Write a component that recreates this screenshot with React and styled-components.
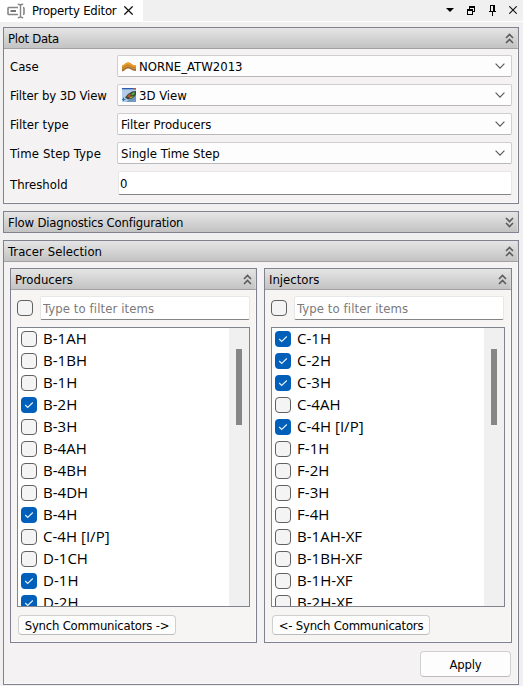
import React from "react";
import styled, { createGlobalStyle, css } from "styled-components";

const GlobalStyle = createGlobalStyle`
  *, *::before, *::after { box-sizing: border-box; }
  body {
    margin: 0;
    background: #f0f0f0;
    color: #000;
    font: 13px/16px "DejaVu Sans Condensed", "DejaVu Sans", sans-serif;
    font-stretch: condensed;
    overflow: hidden;
  }
  button, input { font: inherit; color: inherit; letter-spacing: inherit; }
  svg { display: block; flex: none; }
`;

const Window = styled.main`
  width: 523px;
  height: 686px;
  display: flex;
  flex-direction: column;
  background: #f0f0f0;
`;

const TitleBar = styled.header`
  height: 22px;
  display: flex;
  justify-content: space-between;
  border-bottom: 1px solid #fff;
`;

const Tab = styled.div`
  width: 143px;
  height: 22px;
  padding: 0 0 1px 7px;
  display: flex;
  align-items: center;
  background: #fff;
`;

const TabTitle = styled.span`
  width: 85px;
  margin: 0 7px 0 7px;
  white-space: nowrap;
  letter-spacing: -0.22px;
`;

const WindowTools = styled.div`
  display: flex;
  align-items: center;
  gap: 13px;
  padding-right: 6px;
  height: 20px;
`;

const Body = styled.div`
  flex: 1;
  display: flex;
  flex-direction: column;
  gap: 7px;
  padding: 5px 4px 1px 3px;
`;

const Group = styled.section`
  flex: ${(p) => (p.$fill ? "1" : "none")};
  height: ${(p) => (p.$height ? `${p.$height}px` : "auto")};
  width: ${(p) => (p.$width ? `${p.$width}px` : "auto")};
  display: flex;
  flex-direction: column;
  border: 1px solid #80838f;
  background: ${(p) => (p.$nested ? "#f7f5f4" : "#f4f2f3")};
  box-shadow: inset -1px -1px #fbfafb;
`;

const GroupHeader = styled.div`
  height: ${(p) => (p.$closed ? 20 : 21)}px;
  flex: none;
  display: flex;
  align-items: center;
  justify-content: space-between;
  padding: 1px 4px 0 4px;
  background: linear-gradient(#e6e5e6, #c3c3c3);
  border-bottom: ${(p) => (p.$closed ? "none" : "1px solid #a4a1a4")};
  box-shadow: inset -1px 0 #d8d8d8;
`;

const Form = styled.div`
  display: flex;
  flex-direction: column;
  gap: 7px;
  padding: 6px 7px 0 6px;
`;

const FormRow = styled.label`
  height: ${(p) => (p.$height || 22)}px;
  display: grid;
  grid-template-columns: 107px 395px;
  align-items: center;
`;

const Label = styled.span`
  white-space: nowrap;
  letter-spacing: ${(p) => p.$spacing || 0}px;
  padding-top: ${(p) => p.$drop || 0}px;
`;

const Combo = styled.div`
  height: 22px;
  display: flex;
  align-items: center;
  padding: 0 6px 0 3px;
  border: 1px solid #cfcfd0;
  border-bottom-color: #b9b9ba;
  border-radius: 2px;
  background: #fdfdfd;
`;

const ComboIcon = styled.span`
  width: 14px;
  margin: 0 3px 0 1px;
`;

const ComboValue = styled.span`
  flex: 1;
  padding-top: 1px;
  white-space: nowrap;
`;

const Field = styled.input`
  display: block;
  width: ${(p) => p.$width}px;
  height: 24px;
  margin: 0 0 0 ${(p) => p.$indent || 0}px;
  padding: 1px 2px 0 ${(p) => (p.$indent ? 1 : 2)}px;
  border: 1px solid #e8e7e7;
  border-bottom-color: #858585;
  border-radius: 2px;
  background: #fff;
  outline: none;
  &::placeholder { color: #7a7a7a; opacity: 1; }
`;

const Columns = styled.div`
  display: flex;
  justify-content: space-between;
  padding: 6px 6px 0;
`;

const FilterRow = styled.div`
  display: flex;
  align-items: center;
  gap: 7px;
  padding: 6px 0 7px 6px;
  letter-spacing: 0.1px;
`;

const Box = styled.span`
  width: 16px;
  height: 16px;
  flex: none;
  display: grid;
  place-items: center;
  border-radius: 4px;
  ${(p) =>
    p.$checked
      ? css`background: #005fb8;`
      : css`border: 1px solid #616161; background: #f4f4f4;`}
`;

const ListFrame = styled.div`
  width: ${(p) => p.$width}px;
  height: 280px;
  margin-left: 6px;
  display: flex;
  border: 1px solid #80858d;
  background: #fff;
`;

const Items = styled.ul`
  flex: 1;
  margin: 0;
  padding: 0 0 0 3px;
  list-style: none;
  overflow: hidden;
`;

const Item = styled.li`
  height: 22px;
  display: flex;
  align-items: center;
  gap: 6px;
  font: 15px/20px "Open Sans", "Noto Sans", sans-serif;
  letter-spacing: 0.03px;
  white-space: nowrap;
`;

const ItemName = styled.span`
  padding-bottom: 2px;
`;

const Track = styled.div`
  width: 20px;
  flex: none;
  padding: 21px 0 0 7px;
  background: #f0f0f0;
`;

const Thumb = styled.div`
  width: 6px;
  height: 76px;
  background: #868686;
`;

const Button = styled.button`
  flex: none;
  width: ${(p) => p.$width}px;
  height: ${(p) => p.$height}px;
  padding: 1px 0 0;
  border: 1px solid #d0d0d0;
  border-bottom-color: #bcbcbc;
  border-radius: 4px;
  background: #fdfdfd;
  white-space: nowrap;
  letter-spacing: ${(p) => p.$spacing || 0}px;
`;

const SyncArea = styled.div`
  padding: 8px 0 0 7px;
`;

const Actions = styled.footer`
  display: flex;
  justify-content: flex-end;
  padding: 8px 7px 0;
`;

const EditorIcon = () => (
  <svg width="18" height="18" viewBox="0 0 18 18" fill="none" stroke="#858585" strokeWidth="1.6">
    <path d="M11 5.500H1.800Q1 5.500 1 6.300v5.400q0 .8.800.8H11M16 5.500q1 0 1 1v5q0 1-1 1" />
    <path d="M3.500 9H9" strokeWidth="2" stroke="#747474" />
    <path d="M13.500 3.500v11M10.800 2.300c1.700 0 2.700.4 2.700 1.400 0-1 1-1.400 2.700-1.400M10.800 15.700c1.700 0 2.700-.4 2.700-1.400 0 1 1 1.400 2.700 1.400" strokeWidth="1.400" />
  </svg>
);

const CloseIcon = ({ size = 8 }) => (
  <svg width={size} height={size} viewBox="0 0 8 8" stroke="#111" strokeWidth="1.1">
    <path d="M.3.3l7.4 7.4M7.700.3L.3 7.700" />
  </svg>
);

const MenuIcon = () => (
  <svg width="8" height="4" viewBox="0 0 8 4"><path d="M0 0h8L4 4z" /></svg>
);

const RestoreIcon = () => (
  <svg width="9" height="9" viewBox="0 0 9 9" fill="none" stroke="#000" shapeRendering="crispEdges">
    <path d="M2.500 3V.5h5v5H6" /><path d="M2 1h6M0 4h6" strokeWidth="2" /><path d="M.5 3.500h5v5h-5z" />
  </svg>
);

const PinIcon = () => (
  <svg width="7" height="11" viewBox="0 0 7 11" fill="none" stroke="#000" shapeRendering="crispEdges">
    <path d="M1.500 6V.5h4V6M0 6.500h7M3.500 7v4" /><path d="M5 0v6" strokeWidth="2" />
  </svg>
);

const Chevrons = ({ down }) => (
  <svg width="9" height="12" viewBox="0 0 9 12" fill="none" stroke="#5c5c5c" strokeWidth="1.6">
    {down ? <path d="M1 1l3.500 3.500L8 1M1 6l3.500 3.500L8 6" /> : <path d="M1 5l3.500-3.500L8 5M1 10l3.500-3.500L8 10" />}
  </svg>
);

const ComboArrow = () => (
  <svg width="10" height="6" viewBox="0 0 10 6" fill="none" stroke="#555" strokeWidth="1.1">
    <path d="M.6.7L5 5.100 9.400.7" />
  </svg>
);

const CheckIcon = () => (
  <svg width="10" height="8" viewBox="0 0 10 8" fill="none" stroke="#e8f4ff" strokeWidth="1.1">
    <path d="M1.200 4l2.500 2.500L8.800 1.500" />
  </svg>
);

const CaseIcon = () => (
  <svg width="14" height="14" viewBox="0 0 14 14">
    <path d="M0 6.500C2.500 6.500 3 3.500 6 3.500S9.500 6.200 14 6.500v5.500c-4.500 0-5-2.500-8-2.500S3 12.500 0 12.500z" fill="#b97e35" />
    <path d="M0 6.500C2.500 6.500 3 3.500 6 3.500S9.500 6.200 14 6.500V8C9.500 8 9 5.500 6 5.500S3 8 0 8z" fill="#f0a127" />
    <path d="M0 9.800c3 0 3-2.800 6-2.800s3.500 2.500 8 2.600" fill="none" stroke="#dc962f" />
    <path d="M0 11.200c3 0 3-2.700 6-2.700s3.500 2.500 8 2.500" fill="none" stroke="#8f6a3d" strokeWidth=".8" />
  </svg>
);

const ViewIcon = () => (
  <svg width="14" height="14" viewBox="0 0 14 14">
    <path d="M0 0h14v14H0z" fill="#b3cbe9" />
    <path d="M0 0h14v1.300H0z" fill="#285dad" /><path d="M11 0h3v1.300h-3z" fill="#d54443" />
    <path d="M4 14l4-3 6-4v7z" fill="#7397c5" />
    <path d="M3 9.500L6 6l4-2.500 4-.5v4l-4 3.500-4 1z" fill="#354c36" />
    <path d="M5 9l2-3 2 .5L7.500 9z" fill="#c8502b" /><path d="M9 6l3-2 1 2-3 1.500z" fill="#55a941" />
    <path d="M8 9l3-1-1 1.800L7 10.500z" fill="#d4a12c" /><path d="M1.500 9.500v3.500M0 11.500h3.500" stroke="#257bb6" />
  </svg>
);

const CheckBox = ({ checked }) => (
  <Box role="checkbox" aria-checked={!!checked} $checked={checked}>{checked && <CheckIcon />}</Box>
);

const settings = [
  { label: "Case", value: "NORNE_ATW2013", Icon: CaseIcon },
  { label: "Filter by 3D View", value: "3D View", Icon: ViewIcon, labelSpacing: -0.1 },
  { label: "Filter type", value: "Filter Producers", labelSpacing: 0 },
  { label: "Time Step Type", value: "Single Time Step", labelSpacing: 0.12 },
];

const tracers = [
  {
    title: "Producers", width: 247, listWidth: 233, action: "Synch Communicators ->",
    items: ["B-1AH", "B-1BH", "B-1H", "B-2H", "B-3H", "B-4AH", "B-4BH", "B-4DH", "B-4H", "C-4H [I/P]", "D-1CH", "D-1H", "D-2H"],
    selected: ["B-2H", "B-4H", "D-1H", "D-2H"],
  },
  {
    title: "Injectors", width: 248, listWidth: 234, action: "<- Synch Communicators",
    items: ["C-1H", "C-2H", "C-3H", "C-4AH", "C-4H [I/P]", "F-1H", "F-2H", "F-3H", "F-4H", "B-1AH-XF", "B-1BH-XF", "B-1H-XF", "B-2H-XF"],
    selected: ["C-1H", "C-2H", "C-3H", "C-4H [I/P]"],
  },
];

const TracerGroup = ({ title, width, listWidth, action, items, selected }) => (
  <Group $nested $width={width} $height={375}>
    <GroupHeader><Label>{title}</Label><Chevrons /></GroupHeader>
    <FilterRow>
      <CheckBox />
      <Field $width={210} placeholder="Type to filter items" />
    </FilterRow>
    <ListFrame $width={listWidth}>
      <Items>
        {items.map((name) => (
          <Item key={name}>
            <CheckBox checked={selected.includes(name)} />
            <ItemName>{name}</ItemName>
          </Item>
        ))}
      </Items>
      <Track><Thumb /></Track>
    </ListFrame>
    <SyncArea><Button $width={158} $height={20} $spacing={-0.22}>{action}</Button></SyncArea>
  </Group>
);

export default function App() {
  return (
    <Window>
      <GlobalStyle />
      <TitleBar>
        <Tab><EditorIcon /><TabTitle>Property Editor</TabTitle><CloseIcon size={9} /></Tab>
        <WindowTools><MenuIcon /><RestoreIcon /><PinIcon /><CloseIcon /></WindowTools>
      </TitleBar>
      <Body>
        <Group $height={177}>
          <GroupHeader><Label $spacing={-0.3}>Plot Data</Label><Chevrons /></GroupHeader>
          <Form>
            {settings.map(({ label, value, Icon, labelSpacing }) => (
              <FormRow key={label}>
                <Label $drop={1} $spacing={labelSpacing}>{label}</Label>
                <Combo>
                  {Icon && <ComboIcon><Icon /></ComboIcon>}
                  <ComboValue>{value}</ComboValue>
                  <ComboArrow />
                </Combo>
              </FormRow>
            ))}
            <FormRow $height={24}>
              <Label $drop={3}>Threshold</Label>
              <Field $width={394} $indent={1} defaultValue="0" />
            </FormRow>
          </Form>
        </Group>
        <Group $height={22}>
          <GroupHeader $closed><Label $spacing={-0.2}>Flow Diagnostics Configuration</Label><Chevrons down /></GroupHeader>
        </Group>
        <Group $fill>
          <GroupHeader><Label $spacing={0.05}>Tracer Selection</Label><Chevrons /></GroupHeader>
          <Columns>{tracers.map((group) => <TracerGroup key={group.title} {...group} />)}</Columns>
          <Actions><Button $width={91} $height={26} $spacing={-0.2}>Apply</Button></Actions>
        </Group>
      </Body>
    </Window>
  );
}
